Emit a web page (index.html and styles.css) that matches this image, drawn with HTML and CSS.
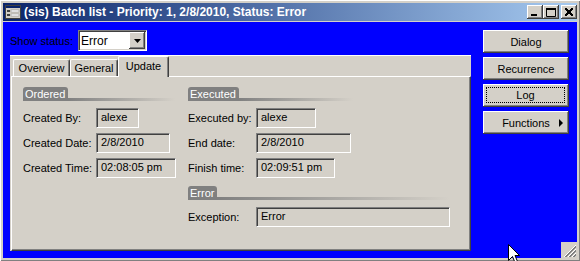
FILE: index.html
```html
<!DOCTYPE html>
<html lang="en">
<head>
    <meta charset="UTF-8">
    <title>(sis) Batch list</title>
    <link rel="stylesheet" href="styles.css">
</head>
<body>
<div class="window">
    <div class="titlebar">
        <svg class="app-icon" width="16" height="14" viewBox="0 0 16 14">
            <rect x="0.5" y="0.5" width="15" height="13" fill="#d4d0c8" stroke="#404040"/>
            <rect x="1" y="1" width="14" height="2" fill="#0a246a"/>
            <rect x="2" y="5" width="3" height="2" fill="#404040"/>
            <rect x="2" y="9" width="3" height="2" fill="#404040"/>
            <rect x="6" y="5" width="8" height="2" fill="#fff" stroke="#808080" stroke-width="0.5"/>
            <rect x="6" y="9" width="8" height="2" fill="#fff" stroke="#808080" stroke-width="0.5"/>
        </svg>
        <span class="title">(sis) Batch list - Priority: 1, 2/8/2010, Status: Error</span>
        <div class="caption-btns">
            <span class="cap-btn">
                <svg width="16" height="14" viewBox="0 0 16 14"><rect x="4" y="9" width="6" height="2" fill="#000"/></svg>
            </span>
            <span class="cap-btn">
                <svg width="16" height="14" viewBox="0 0 16 14"><path d="M3.5 3.5h9v8h-9z" fill="none" stroke="#000"/><rect x="3" y="3" width="10" height="2" fill="#000"/></svg>
            </span>
            <span class="cap-btn close">
                <svg width="16" height="14" viewBox="0 0 16 14"><path d="M4 3l8 8M5 3l7 7M4 4l7 7M12 3l-8 8M11 3l-7 7M12 4l-7 7" stroke="#000" stroke-width="1"/></svg>
            </span>
        </div>
    </div>

    <div class="client">
        <div class="main">
            <div class="status-row">
                <span class="status-label">Show status:</span>
                <div class="combo">
                    <span class="combo-text">Error</span>
                    <span class="combo-btn">
                        <svg width="7" height="4" viewBox="0 0 7 4"><path d="M0 0h7L3.5 4z" fill="#000"/></svg>
                    </span>
                </div>
            </div>

            <div class="tabctl">
                <div class="tabs">
                    <span class="tab tab-overview">Overview</span>
                    <span class="tab tab-general">General</span>
                    <span class="tab tab-update active">Update</span>
                </div>
                <div class="page">
                    <div class="col col-ordered">
                        <div class="group-hdr hdr-ordered"><span class="hdr-label">Ordered</span><span class="hdr-line"></span></div>
                        <div class="field"><span class="lbl">Created By:</span><span class="box w-created-by">alexe</span></div>
                        <div class="field"><span class="lbl">Created Date:</span><span class="box w-created-date">2/8/2010</span></div>
                        <div class="field"><span class="lbl">Created Time:</span><span class="box w-created-time">02:08:05 pm</span></div>
                    </div>
                    <div class="col col-executed">
                        <div class="group-hdr hdr-executed"><span class="hdr-label">Executed</span><span class="hdr-line"></span></div>
                        <div class="field"><span class="lbl">Executed by:</span><span class="box w-exec-by">alexe</span></div>
                        <div class="field"><span class="lbl">End date:</span><span class="box w-end-date">2/8/2010</span></div>
                        <div class="field"><span class="lbl">Finish time:</span><span class="box w-finish">02:09:51 pm</span></div>

                        <div class="group-hdr hdr-error"><span class="hdr-label">Error</span><span class="hdr-line"></span></div>
                        <div class="field"><span class="lbl">Exception:</span><span class="box w-exception">Error</span></div>
                    </div>
                </div>
            </div>
        </div>

        <div class="side">
            <button class="btn">Dialog</button>
            <button class="btn">Recurrence</button>
            <button class="btn btn-focus"><span class="focus-rect">Log</span></button>
            <button class="btn btn-menu"><span class="btn-text">Functions</span><span class="menu-arrow"></span></button>
        </div>

        <div class="grip">
            <svg width="16" height="16" viewBox="0 0 16 16">
                <path d="M15 3L3 15M15 7L7 15M15 11L11 15" stroke="#fff"/>
                <path d="M15 4L4 15M15 5L5 15M15 8L8 15M15 9L9 15M15 12L12 15M15 13L13 15" stroke="#808080"/>
            </svg>
        </div>
    </div>

    <svg class="cursor" width="13" height="20" viewBox="0 0 13 20">
        <path d="M0.5 0.5V16.5L4.5 12.5L7 18.5L9.5 17.5L7 11.5H11.5Z" fill="#fff" stroke="#000" stroke-linejoin="miter"/>
    </svg>
</div>
</body>
</html>
```

FILE: styles.css
```css
html, body {
    margin: 0;
    padding: 0;
    background: #d4d0c8;
}
body {
    font-family: "Liberation Sans", Arial, sans-serif;
    font-size: 11px;
    color: #000;
}
.window {
    position: relative;
    width: 580px;
    height: 261px;
    box-sizing: border-box;
    padding: 3px;
    background: #d4d0c8;
    overflow: hidden;
    box-shadow: inset 1px 1px #ffffff, inset -1px -1px #808080;
}
.titlebar {
    display: flex;
    align-items: center;
    height: 18px;
    margin-bottom: 1px;
    padding-left: 2px;
    background: linear-gradient(to right, #0a246a, #a6caf0);
}
.app-icon {
    margin-right: 3px;
}
.title {
    flex: 1;
    color: #fff;
    font-size: 12px;
    font-weight: bold;
    white-space: nowrap;
}
.caption-btns {
    display: flex;
    margin-right: 0;
}
.cap-btn {
    display: block;
    width: 16px;
    height: 14px;
    background: #d4d0c8;
    box-shadow: inset -1px -1px #404040, inset 1px 1px #fff, inset -2px -2px #808080;
}
.cap-btn svg {
    display: block;
}
.cap-btn.close {
    margin-left: 2px;
}

/* client area */
.client {
    position: relative;
    display: flex;
    height: 236px;
    box-sizing: border-box;
    padding: 8px 0 0 7px;
    background: #0000ff;
}
.main {
    width: 461px;
}
.status-row {
    display: flex;
    align-items: center;
    height: 21px;
}
.status-label {
    width: 68px;
}
.combo {
    display: flex;
    align-items: center;
    width: 69px;
    height: 21px;
    box-sizing: border-box;
    background: #fff;
    border-top: 1px solid #808080;
    border-left: 1px solid #808080;
    border-right: 1px solid #fff;
    border-bottom: 1px solid #fff;
    box-shadow: inset 1px 1px #404040, inset -1px -1px #d4d0c8;
}
.combo-text {
    flex: 1;
    padding-left: 2px;
    font-size: 12px;
}
.combo-btn {
    display: flex;
    align-items: center;
    justify-content: center;
    width: 16px;
    height: 17px;
    margin-right: 1px;
    background: #d4d0c8;
    box-shadow: inset -1px -1px #404040, inset 1px 1px #fff, inset -2px -2px #808080;
}

/* tab control */
.tabctl {
    display: flex;
    flex-direction: column;
    height: 196px;
    margin-top: 4px;
    box-sizing: border-box;
    padding-left: 1px;
    background: #d4d0c8;
    border-top: 1px solid #fff;
}
.tabs {
    display: flex;
    align-items: flex-end;
    height: 20px;
    padding-left: 2px;
}
.tab {
    display: flex;
    align-items: center;
    justify-content: center;
    height: 17px;
    box-sizing: border-box;
    border-top: 1px solid #fff;
    border-left: 1px solid #fff;
    border-right: 1px solid #404040;
    border-radius: 2px 2px 0 0;
    box-shadow: inset -1px 0 #808080;
    background: #d4d0c8;
}
.tab-overview { width: 57px; }
.tab-general { width: 48px; }
.tab-update { width: 51px; }
.tab.active {
    position: relative;
    height: 21px;
    margin-bottom: -1px;
    padding-bottom: 2px;
    z-index: 1;
}
.page {
    flex: 1;
    box-sizing: border-box;
    padding: 10px 0 0 11px;
    border-top: 1px solid #fff;
    border-left: 1px solid #fff;
    border-right: 1px solid #404040;
    border-bottom: 1px solid #404040;
    box-shadow: inset -1px -1px #808080;
    display: flex;
}
.col-ordered {
    width: 165px;
}
.col-ordered .lbl {
    width: 73px;
}
.col-executed .lbl {
    width: 68px;
}
.group-hdr {
    display: flex;
    height: 14px;
    margin-bottom: 7px;
}
.hdr-ordered { width: 152px; }
.hdr-executed { width: 165px; }
.hdr-error {
    width: 262px;
    margin-top: 8px;
}
.hdr-label {
    padding: 0 3px 0 2px;
    line-height: 14px;
    color: #fff;
    background: #808080;
    border-radius: 3px 3px 0 0;
}
.hdr-line {
    flex: 1;
    align-self: flex-end;
    height: 3px;
    background: linear-gradient(to right, #808080, #d4d0c8);
}
.field {
    display: flex;
    align-items: center;
    height: 20px;
    margin-bottom: 5px;
}
.box {
    height: 20px;
    box-sizing: border-box;
    padding-left: 4px;
    line-height: 16px;
    white-space: nowrap;
    border-top: 1px solid #808080;
    border-left: 1px solid #808080;
    border-right: 1px solid #fff;
    border-bottom: 1px solid #fff;
    box-shadow: inset 1px 1px #404040;
}
.w-created-by { width: 43px; }
.w-created-date { width: 74px; }
.w-created-time { width: 80px; }
.w-exec-by { width: 60px; }
.w-end-date { width: 95px; }
.w-finish { width: 79px; }
.w-exception { width: 194px; }

/* right buttons */
.side {
    display: flex;
    flex-direction: column;
    gap: 4px;
    margin-left: 12px;
}
.btn {
    display: flex;
    align-items: center;
    justify-content: center;
    width: 86px;
    height: 23px;
    padding: 0;
    font-family: inherit;
    font-size: 11px;
    color: #000;
    background: #d4d0c8;
    border: none;
    box-shadow: inset -1px -1px #404040, inset 1px 1px #fff, inset -2px -2px #808080;
}
.btn-focus {
    padding: 3px 4px 4px 3px;
}
.focus-rect {
    flex: 1;
    align-self: stretch;
    display: flex;
    align-items: center;
    justify-content: center;
    border: 1px dotted #000;
}
.btn-menu {
    padding-left: 10px;
}
.btn-text {
    flex: 1;
    text-align: center;
}
.menu-arrow {
    width: 0;
    height: 0;
    margin-right: 6px;
    border-top: 4px solid transparent;
    border-bottom: 4px solid transparent;
    border-left: 4px solid #000;
}
.grip {
    position: absolute;
    right: 0;
    bottom: 0;
    width: 16px;
    height: 16px;
    background: #d4d0c8;
}
.grip svg {
    display: block;
}
.cursor {
    position: absolute;
    left: 508px;
    top: 244px;
}
```
